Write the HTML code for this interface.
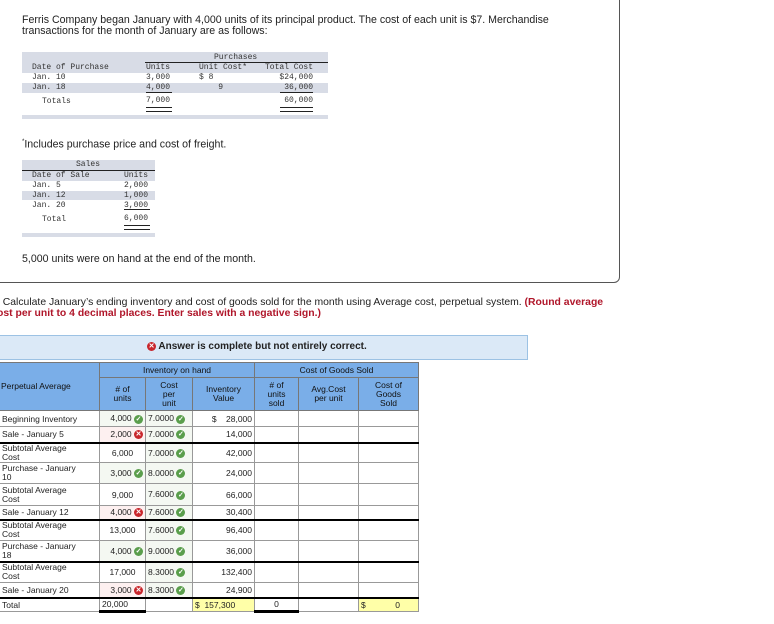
<!DOCTYPE html>
<html><head><meta charset="utf-8"><style>
body{margin:0;width:774px;height:624px;background:#fff;position:relative;overflow:hidden;font-family:"Liberation Sans",sans-serif;color:#222}
.a{position:absolute}
.box{left:-10px;top:-5px;width:628px;height:286px;border:1px solid #555;border-radius:0 0 6px 0}
.m{font-family:"Liberation Mono",monospace;font-size:8px;color:#333;line-height:10px;white-space:nowrap}
.p{font-size:10.6px;line-height:11px}
.ok,.bad{display:inline-block;width:9px;height:9px;border-radius:50%;vertical-align:middle;color:#fff;font-size:7px;line-height:9px;text-align:center;font-weight:bold}
.ok{background:#5a9e4c}.bad{background:#c8262c}
table{border-collapse:collapse;table-layout:fixed;font-size:8.5px;position:absolute;left:-1px;top:362px}
td{border:1px solid #999;padding:0 2px;overflow:hidden;white-space:nowrap;line-height:10px}
th{background:#7aaee8;border:1px solid #777;font-weight:normal;font-size:8.5px;line-height:9px;color:#111}
.r{text-align:right}.c{text-align:center}
.g{background:#f4f8f2}.pk{background:#fdf0f0}
.bt td{border-bottom:2px solid #000}
.y{background:#ffffa8}
.w{white-space:normal;line-height:9px}
</style></head><body>
<div class="a box"></div>
<div class="a p" style="left:22px;top:15px;width:545px">Ferris Company began January with 4,000 units of its principal product. The cost of each unit is $7. Merchandise transactions for the month of January are as follows:</div>

<div class="a" style="left:22px;top:52px;width:306px;height:67px;background:#d8dce6"></div>
<div class="a" style="left:22px;top:73px;width:306px;height:10px;background:#fff"></div>
<div class="a" style="left:22px;top:93px;width:306px;height:22px;background:#fff"></div>
<div class="a" style="left:145px;top:62px;width:183px;height:1px;background:#222"></div>
<div class="a m" style="left:214px;top:53px">Purchases</div>
<div class="a m" style="left:32px;top:63px">Date of Purchase<br>Jan. 10<br>Jan. 18</div>
<div class="a m" style="left:42px;top:97px">Totals</div>
<div class="a m" style="left:146px;top:63px">Units<br>3,000<br>4,000</div>
<div class="a" style="left:146px;top:92px;width:26px;height:1px;background:#222"></div>
<div class="a m" style="left:146px;top:96px">7,000</div>
<div class="a" style="left:146px;top:107px;width:26px;height:3px;border-top:1px solid #222;border-bottom:1px solid #222"></div>
<div class="a m" style="left:199px;top:63px">Unit Cost*<br>$ 8<br>&nbsp;&nbsp;&nbsp;&nbsp;9</div>
<div class="a m" style="left:263px;top:63px;text-align:right;width:50px">Total Cost<br>$24,000<br>36,000</div>
<div class="a" style="left:280px;top:92px;width:33px;height:1px;background:#222"></div>
<div class="a m" style="left:263px;top:96px;text-align:right;width:50px">60,000</div>
<div class="a" style="left:280px;top:107px;width:33px;height:3px;border-top:1px solid #222;border-bottom:1px solid #222"></div>

<div class="a p" style="left:22px;top:137px"><sup style="font-size:6px">*</sup>Includes purchase price and cost of freight.</div>

<div class="a" style="left:22px;top:160px;width:133px;height:77px;background:#d8dce6"></div>
<div class="a" style="left:22px;top:170px;width:133px;height:1px;background:#222"></div>
<div class="a" style="left:22px;top:181px;width:133px;height:10px;background:#fff"></div>
<div class="a" style="left:22px;top:200px;width:133px;height:33px;background:#fff"></div>
<div class="a m" style="left:76px;top:160px">Sales</div>
<div class="a m" style="left:32px;top:171px">Date of Sale<br>Jan. 5<br>Jan. 12<br>Jan. 20</div>
<div class="a m" style="left:42px;top:215px">Total</div>
<div class="a m" style="left:124px;top:171px">Units<br>2,000<br>1,000<br>3,000</div>
<div class="a" style="left:124px;top:209px;width:26px;height:1px;background:#222"></div>
<div class="a m" style="left:124px;top:214px">6,000</div>
<div class="a" style="left:124px;top:225px;width:26px;height:3px;border-top:1px solid #222;border-bottom:1px solid #222"></div>

<div class="a p" style="left:22px;top:254px">5,000 units were on hand at the end of the month.</div>

<div class="a p" style="left:-3px;top:297px;width:640px;font-size:10.4px">. Calculate January’s ending inventory and cost of goods sold for the month using Average cost, perpetual system. <b style="color:#b0162a">(Round average<br>ost per unit to 4 decimal places. Enter sales with a negative sign.)</b></div>

<div class="a" style="left:-2px;top:335px;width:528px;height:23px;background:#dbe9f7;border:1px solid #9cc2e4"></div>
<div class="a" style="left:147px;top:341px;font-size:10px;font-weight:bold"><span class="bad">✕</span> Answer is complete but not entirely correct.</div>

<table>
<colgroup><col style="width:100px"><col style="width:46px"><col style="width:47px"><col style="width:62px"><col style="width:44px"><col style="width:60px"><col style="width:60px"></colgroup>
<tr style="height:15px"><th rowspan="2" style="text-align:left;padding-left:1px">Perpetual Average</th><th colspan="3">Inventory on hand</th><th colspan="3">Cost of Goods Sold</th></tr>
<tr style="height:33px"><th># of<br>units</th><th>Cost<br>per<br>unit</th><th>Inventory<br>Value</th><th># of<br>units<br>sold</th><th>Avg.Cost<br>per unit</th><th>Cost of<br>Goods<br>Sold</th></tr>
<tr style="height:16px"><td>Beginning Inventory</td><td class="r g">4,000 <span class="ok">✓</span></td><td class="g">7.0000 <span class="ok">✓</span></td><td class="r">$ &nbsp;&nbsp;&nbsp;28,000</td><td></td><td></td><td></td></tr>
<tr style="height:16px" class="bt"><td>Sale - January 5</td><td class="r pk">2,000 <span class="bad">✕</span></td><td class="g">7.0000 <span class="ok">✓</span></td><td class="r">14,000</td><td></td><td></td><td></td></tr>
<tr style="height:20px"><td class="w">Subtotal Average<br>Cost</td><td class="c">6,000</td><td class="g">7.0000 <span class="ok">✓</span></td><td class="r">42,000</td><td></td><td></td><td></td></tr>
<tr style="height:21px"><td class="w">Purchase - January<br>10</td><td class="r g">3,000 <span class="ok">✓</span></td><td class="g">8.0000 <span class="ok">✓</span></td><td class="r">24,000</td><td></td><td></td><td></td></tr>
<tr style="height:22px"><td class="w">Subtotal Average<br>Cost</td><td class="c">9,000</td><td class="g">7.6000 <span class="ok">✓</span></td><td class="r">66,000</td><td></td><td></td><td></td></tr>
<tr style="height:14px" class="bt"><td>Sale - January 12</td><td class="r pk">4,000 <span class="bad">✕</span></td><td class="g">7.6000 <span class="ok">✓</span></td><td class="r">30,400</td><td></td><td></td><td></td></tr>
<tr style="height:21px"><td class="w">Subtotal Average<br>Cost</td><td class="c">13,000</td><td class="g">7.6000 <span class="ok">✓</span></td><td class="r">96,400</td><td></td><td></td><td></td></tr>
<tr style="height:21px" class="bt"><td class="w">Purchase - January<br>18</td><td class="r g">4,000 <span class="ok">✓</span></td><td class="g">9.0000 <span class="ok">✓</span></td><td class="r">36,000</td><td></td><td></td><td></td></tr>
<tr style="height:21px"><td class="w">Subtotal Average<br>Cost</td><td class="c">17,000</td><td class="g">8.3000 <span class="ok">✓</span></td><td class="r">132,400</td><td></td><td></td><td></td></tr>
<tr style="height:15px" class="bt"><td>Sale - January 20</td><td class="r pk">3,000 <span class="bad">✕</span></td><td class="g">8.3000 <span class="ok">✓</span></td><td class="r">24,900</td><td></td><td></td><td></td></tr>
<tr style="height:14px"><td>Total</td><td style="border-bottom:3px solid #000">20,000</td><td></td><td class="y">$ &nbsp;157,300</td><td class="c" style="border-bottom:3px solid #000">0</td><td></td><td class="y">$<span style="float:right;margin-right:16px">0</span></td></tr>
</table>
</body></html>
